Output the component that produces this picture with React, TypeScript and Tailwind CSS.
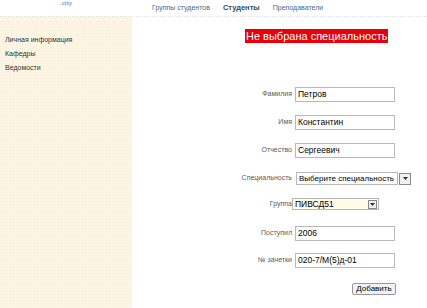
import React from "react";

const font = { fontFamily: '"Liberation Sans", Arial, sans-serif' };

function Arrow() {
  return (
    <svg width="5" height="3" viewBox="0 0 5 3">
      <path d="M0 0 L5 0 L2.5 3 Z" fill="#333" />
    </svg>
  );
}

function Row({ label, children, mt }: { label: string; children: React.ReactNode; mt: string }) {
  return (
    <div className={`flex items-center ${mt}`}>
      <div className="w-[149px] pr-[2px] text-right text-[7px] text-[#5a5a5a]">{label}</div>
      {children}
    </div>
  );
}

function Input({ value }: { value: string }) {
  return (
    <div className="ml-[1px] flex h-[15px] w-[100px] items-center whitespace-nowrap border border-[#b8b8b8] bg-white pl-[2px] text-[8.5px] text-black">
      {value}
    </div>
  );
}

export default function App() {
  return (
    <div className="h-[308px] w-[427px] overflow-hidden bg-white" style={font}>
      <div className="relative h-[17px] border-b border-dotted border-[#e2e2e2]">
        <div className="absolute left-[60px] top-0 text-[6px] leading-[6px] font-bold text-[#8aa0b8]">.city</div>
        <div className="flex h-full items-center gap-[13px] pl-[152px] text-[7px] text-[#4a6a8a]">
          <span>Группы студентов</span>
          <span className="font-bold text-[#2a4a6a] text-[7.5px]">Студенты</span>
          <span>Преподаватели</span>
        </div>
      </div>
      <div className="flex h-[291px]">
        <div className="w-[132px] bg-[#fdf5e3] bg-[radial-gradient(#fbedd0_0.6px,transparent_0.8px)] bg-[length:3px_3px] pl-[5px] pt-[17px] text-[7px] text-[#333]">
          <div className="h-[15px] leading-[11px]">Личная информация</div>
          <div className="h-[15px] leading-[9px]">Кафедры</div>
          <div className="leading-[7px]">Ведомости</div>
        </div>
        <div className="ml-[13px] flex-1">
          <div className="flex h-[31px] bg-[radial-gradient(#e4e4e4_0.6px,transparent_0.7px)] bg-[length:4px_4px] pl-[100px] pt-[12px]">
            <div className="flex h-[14px] items-center bg-[#e8000b] px-[1px] text-[11px] leading-none text-white">
              Не выбрана специальность
            </div>
          </div>
          <Row label="Фамилия" mt="mt-[39px]">
            <Input value="Петров" />
          </Row>
          <Row label="Имя" mt="mt-[13px]">
            <Input value="Константин" />
          </Row>
          <Row label="Отчество" mt="mt-[13px]">
            <Input value="Сергеевич" />
          </Row>
          <Row label="Специальность" mt="mt-[14px]">
            <div className="ml-[2px] flex h-[13px] items-center">
              <div className="flex h-[13px] w-[102px] items-center whitespace-nowrap border border-[#b8b8b8] bg-white pl-[2px] text-[8px] text-black">
                Выберите специальность
              </div>
              <div className="ml-[1px] flex h-[12px] w-[12px] items-center justify-center border border-[#888] bg-[#f0f0f0]">
                <Arrow />
              </div>
            </div>
          </Row>
          <Row label="Группа" mt="mt-[13px]">
            <div className="ml-[-2px] flex h-[12px] w-[87px] items-center justify-between border border-[#b8b8b8] bg-[#fffbe6] pl-[2px] pr-[1px] text-[8.5px] text-black">
              <span>ПИВСД51</span>
              <div className="flex h-[9px] w-[9px] items-center justify-center border border-[#888] bg-[#f0f0f0]">
                <Arrow />
              </div>
            </div>
          </Row>
          <Row label="Поступил" mt="mt-[16px]">
            <Input value="2006" />
          </Row>
          <Row label="№ зачетки" mt="mt-[12px]">
            <Input value="020-7/М(5)д-01" />
          </Row>
          <div className="mt-[15px] flex justify-end pr-[31px]">
            <div className="flex h-[12px] w-[44px] items-center justify-center rounded-[2px] border border-[#999] bg-[#f2f2f2] text-[8px] text-black">
              Добавить
            </div>
          </div>
        </div>
      </div>
    </div>
  );
}
